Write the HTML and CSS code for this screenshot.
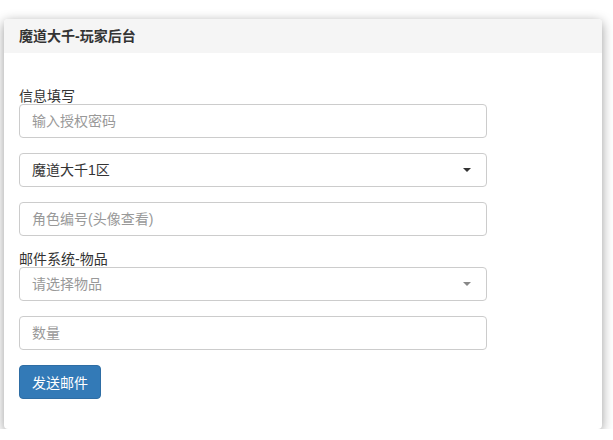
FILE: index.html
```html
<!DOCTYPE html>
<html lang="zh-CN">
<head>
<meta charset="utf-8">
<title>魔道大千-玩家后台</title>
<link rel="stylesheet" href="styles.css">
</head>
<body>
<div class="page">
  <div class="panel">
    <div class="panel-heading">
      <h3 class="panel-title">魔道大千-玩家后台</h3>
    </div>
    <div class="panel-body">
      <form class="form">
        <div class="form-group">
          <label class="label">信息填写</label>
          <input class="control" type="text" placeholder="输入授权密码">
        </div>
        <div class="form-group">
          <div class="control select">
            <span class="select-text">魔道大千1区</span>
            <span class="caret"></span>
          </div>
        </div>
        <div class="form-group">
          <input class="control" type="text" placeholder="角色编号(头像查看)">
        </div>
        <div class="form-group">
          <label class="label">邮件系统-物品</label>
          <div class="control select">
            <span class="select-text placeholder">请选择物品</span>
            <span class="caret caret-light"></span>
          </div>
        </div>
        <div class="form-group">
          <input class="control" type="text" placeholder="数量">
        </div>
        <div class="actions">
          <button class="btn" type="button">发送邮件</button>
        </div>
      </form>
    </div>
  </div>
</div>
</body>
</html>
```

FILE: styles.css
```css
* {
  box-sizing: border-box;
}

html, body {
  margin: 0;
  padding: 0;
  background: #ffffff;
}

body {
  font-family: "Liberation Sans", "Noto Sans CJK SC", sans-serif;
  font-size: 14px;
  color: #333333;
}

.page {
  padding: 19px 11px 0 4px;
}

.panel {
  background: #ffffff;
  border-radius: 4px;
  box-shadow: 0 3px 12px rgba(0, 0, 0, 0.4);
}

.panel-heading {
  height: 34px;
  padding: 0 15px;
  display: flex;
  align-items: center;
  background: #f5f5f5;
  border-radius: 4px 4px 0 0;
}

.panel-title {
  margin: 0;
  font-size: 14px;
  font-weight: bold;
  color: #333333;
  line-height: 16px;
}

.panel-body {
  padding: 35px 15px 30px;
}

.form {
  width: 468px;
}

.form-group {
  margin-bottom: 15px;
}

.label {
  display: block;
  font-size: 14px;
  line-height: 16px;
  color: #333333;
}

.control {
  display: block;
  width: 100%;
  height: 34px;
  margin: 0;
  padding: 0 12px;
  font-family: inherit;
  font-size: 14px;
  color: #333333;
  background: #ffffff;
  border: 1px solid #cccccc;
  border-radius: 4px;
  outline: none;
}

.control::placeholder {
  color: #999999;
}

.select {
  display: flex;
  align-items: center;
  justify-content: space-between;
  padding-right: 15px;
}

.select-text {
  line-height: 16px;
}

.placeholder {
  color: #999999;
}

.caret {
  width: 0;
  height: 0;
  border-left: 4px solid transparent;
  border-right: 4px solid transparent;
  border-top: 4px solid #333333;
}

.caret-light {
  border-top-color: #888888;
}

.btn {
  display: block;
  height: 34px;
  padding: 0 12px;
  font-family: inherit;
  font-size: 14px;
  color: #ffffff;
  background: #337ab7;
  border: 1px solid #2e6da4;
  border-radius: 4px;
}
```
